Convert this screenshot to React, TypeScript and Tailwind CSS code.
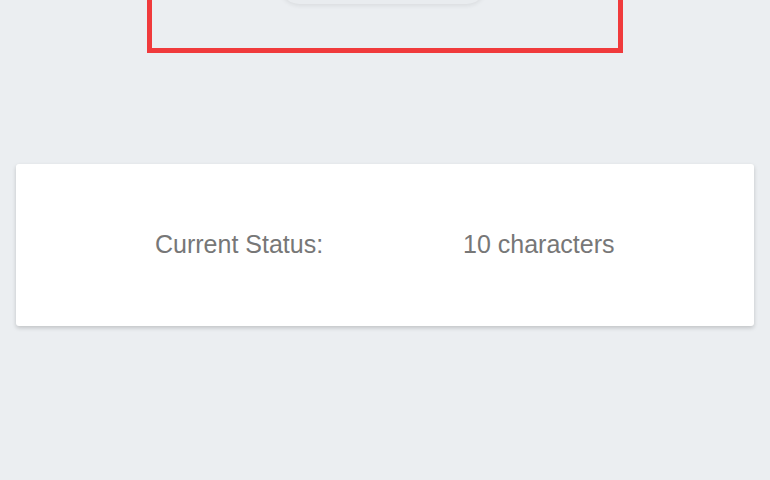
export default function App() {
  return (
    <div className="min-h-[480px] w-[770px] overflow-hidden bg-[#ebeef1] font-['Liberation_Sans',Arial,sans-serif]">
      <div className="ml-[147px] -mt-[100px] h-[153px] w-[476px] border-[5px] border-[#f03a3c] flex justify-center">
        <div className="ml-[-4px] mt-[60px] h-[39px] w-[206px] rounded-full bg-[#e9ecef] shadow-[0_2px_4px_rgba(0,0,0,0.07)]" />
      </div>
      <div className="mx-[16px] mt-[111px] h-[162px] rounded-[3px] bg-white shadow-[0_2px_4px_rgba(0,0,0,0.18)] flex items-center pl-[139px] text-[25px] text-[#777777]">
        <span className="w-[308px]">Current Status:</span>
        <span>10 characters</span>
      </div>
    </div>
  );
}
